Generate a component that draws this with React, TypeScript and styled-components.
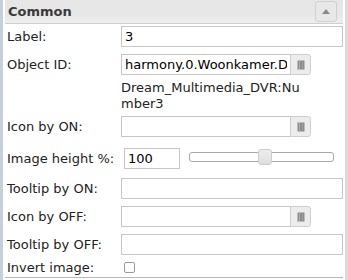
import React from "react";
import styled, { createGlobalStyle } from "styled-components";

const Global = createGlobalStyle`
  html, body { margin: 0; padding: 0; background: #fff; }
  body { font-family: "DejaVu Sans", Verdana, sans-serif; font-size: 13px; color: #222; }
`;

const Frame = styled.div`
  display: flex;
  width: 348px;
  height: 280px;
  overflow: hidden;
`;

const LeftEdge = styled.div`
  width: 3px;
  background: #c4d0dc;
  flex: none;
`;

const Panel = styled.div`
  width: 338px;
  margin-left: 2px;
  display: flex;
  flex-direction: column;
  border-bottom: 1px solid #b8b8b8;
  height: 277px;
`;

const RightStrip = styled.div`
  width: 3px;
  margin-left: 2px;
  background: #dcdcdc;
  flex: none;
`;

const Header = styled.div`
  box-sizing: border-box;
  height: 24px;
  display: flex;
  align-items: center;
  justify-content: space-between;
  padding: 0 6px 0 3px;
  background: linear-gradient(#e6e6e6 0%, #e7e7e7 60%, #eeeeee 100%);
  border-bottom: 1px solid #cfcfcf;
  flex: none;
`;

const Title = styled.span`
  font-weight: bold;
  font-size: 13px;
  color: #3a3a3a;
`;

const CollapseButton = styled.div`
  box-sizing: border-box;
  width: 22px;
  height: 21px;
  border: 1px solid #d0d0d0;
  border-radius: 3px;
  background: #e8e8e8;
  display: flex;
  align-items: center;
  justify-content: center;
`;

const Body = styled.div`
  display: flex;
  flex-direction: column;
  padding-left: 2px;
`;

const Row = styled.div<{ $h: number; $pt?: number; $center?: boolean }>`
  box-sizing: border-box;
  height: ${(p) => p.$h}px;
  padding-top: ${(p) => p.$pt ?? 0}px;
  display: flex;
  align-items: ${(p) => (p.$center ? "center" : "flex-start")};
`;

const Label = styled.div`
  width: 114px;
  flex: none;
  line-height: 21px;
  white-space: nowrap;
  color: #222;
`;

const Value = styled.div`
  display: flex;
  align-items: flex-start;
`;

const TextInput = styled.input<{ $w: number; $ml?: number }>`
  box-sizing: border-box;
  width: ${(p) => p.$w}px;
  height: 21px;
  margin: 0 0 0 ${(p) => p.$ml ?? 0}px;
  padding: 0 3px;
  border: 1px solid #c6c6c6;
  font-family: "DejaVu Sans", Verdana, sans-serif;
  font-size: 13px;
  color: #000;
  background: #fff;
  outline: none;
`;

const PickerGroup = styled.div`
  display: flex;
  width: 190px;
`;

const PickerButton = styled.div`
  box-sizing: border-box;
  width: 21px;
  height: 21px;
  margin-left: -1px;
  border: 1px solid #cfcfcf;
  border-radius: 0 3px 3px 0;
  background: #ececec;
  display: flex;
  align-items: center;
  justify-content: center;
`;

const Note = styled.div`
  width: 190px;
  line-height: 16px;
  word-break: break-all;
  color: #222;
`;

const Track = styled.div`
  position: relative;
  box-sizing: border-box;
  width: 145px;
  height: 10px;
  margin: 4px 0 0 9px;
  border: 1px solid #a8a8a8;
  border-radius: 3px;
  background: #fff;
`;

const Handle = styled.div`
  position: absolute;
  top: -4px;
  box-sizing: border-box;
  width: 14px;
  height: 16px;
  border: 1px solid #cccccc;
  border-radius: 3px;
  background: linear-gradient(#ececec 0%, #e6e6e6 50%, #dedede 100%);
`;

const Check = styled.div`
  box-sizing: border-box;
  width: 11px;
  height: 11px;
  margin-left: 3px;
  border: 1px solid #9a9a9a;
  border-radius: 2px;
  background: #fff;
`;

const PickerIcon = () => (
  <svg width="8" height="10" viewBox="0 0 8 10">
    <rect x="0.5" y="0.5" width="7" height="9" fill="#8c8c8c" />
    <line x1="2.5" y1="1" x2="2.5" y2="9" stroke="#b0b0b0" strokeWidth="1" />
    <line x1="5.5" y1="1" x2="5.5" y2="9" stroke="#a0a0a0" strokeWidth="1" />
  </svg>
);

const Picker = ({ value }: { value?: string }) => (
  <PickerGroup>
    <TextInput $w={170} defaultValue={value} />
    <PickerButton>
      <PickerIcon />
    </PickerButton>
  </PickerGroup>
);

export default function App() {
  const sliderPos = 68;
  return (
    <>
      <Global />
      <Frame>
        <LeftEdge />
        <Panel>
          <Header>
            <Title>Common</Title>
            <CollapseButton>
              <svg width="8" height="5" viewBox="0 0 8 5">
                <polygon points="4,0 8,5 0,5" fill="#8a8a8a" />
              </svg>
            </CollapseButton>
          </Header>
          <Body>
            <Row $h={28} $pt={2}>
              <Label>Label:</Label>
              <Value>
                <TextInput $w={222} defaultValue="3" />
              </Value>
            </Row>

            <Row $h={28} $pt={2}>
              <Label>Object ID:</Label>
              <Value>
                <Picker value="harmony.0.Woonkamer.Dream_Multimedia_DVR:Number3" />
              </Value>
            </Row>

            <Row $h={34} $pt={0}>
              <Label />
              <Note>Dream_Multimedia_DVR:Number3</Note>
            </Row>

            <Row $h={28} $pt={2}>
              <Label>Icon by ON:</Label>
              <Value>
                <Picker />
              </Value>
            </Row>

            <Row $h={32} $pt={6}>
              <Label>Image height %:</Label>
              <Value>
                <TextInput $w={56} $ml={3} defaultValue="100" />
                <Track>
                  <Handle style={{ left: `${sliderPos}px` }} />
                </Track>
              </Value>
            </Row>

            <Row $h={28} $pt={4}>
              <Label>Tooltip by ON:</Label>
              <Value>
                <TextInput $w={222} />
              </Value>
            </Row>

            <Row $h={28} $pt={4}>
              <Label>Icon by OFF:</Label>
              <Value>
                <Picker />
              </Value>
            </Row>

            <Row $h={28} $pt={4}>
              <Label>Tooltip by OFF:</Label>
              <Value>
                <TextInput $w={222} />
              </Value>
            </Row>

            <Row $h={19} $center>
              <Label>Invert image:</Label>
              <Check />
            </Row>
          </Body>
        </Panel>
        <RightStrip />
      </Frame>
    </>
  );
}
